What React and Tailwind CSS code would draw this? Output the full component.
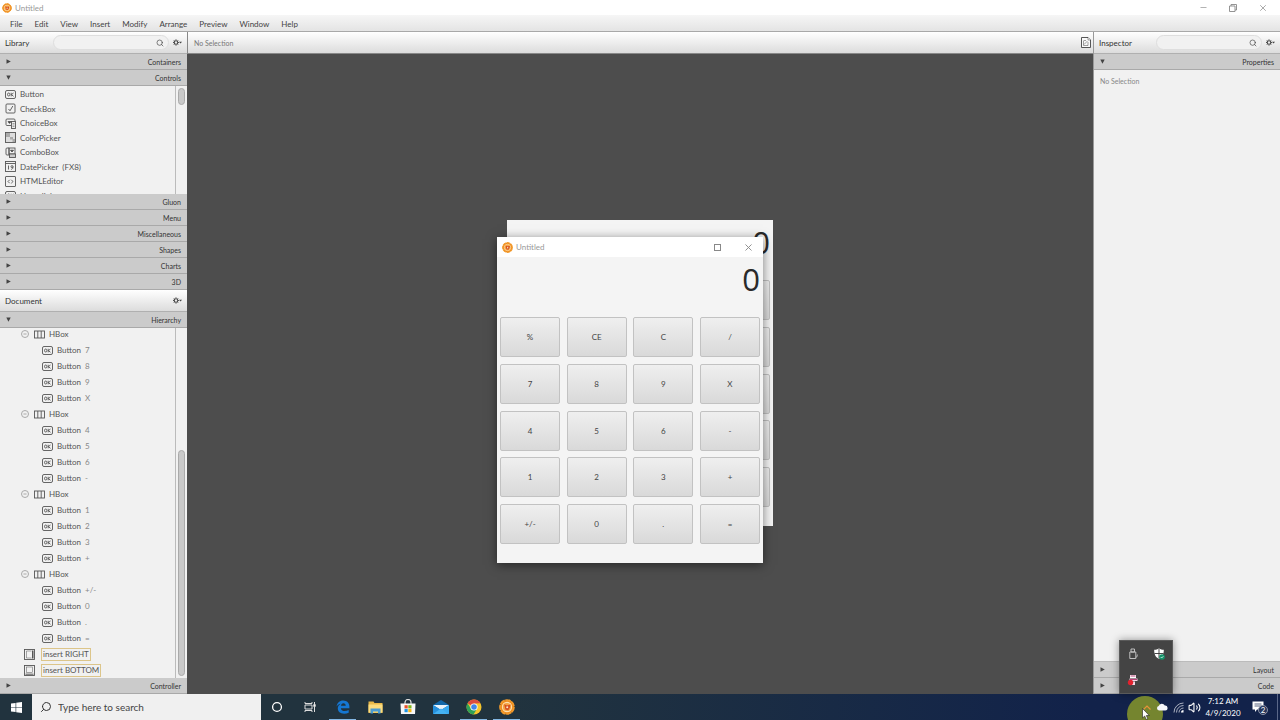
import React, { useState } from 'react'
import { Minus, Search, Volume2, X } from 'lucide-react'

const menus = ['File', 'Edit', 'View', 'Insert', 'Modify', 'Arrange', 'Preview', 'Window', 'Help']

const controls = [
  { label: 'Button', icon: 'button' },
  { label: 'CheckBox', icon: 'check' },
  { label: 'ChoiceBox', icon: 'choice' },
  { label: 'ColorPicker', icon: 'color' },
  { label: 'ComboBox', icon: 'combo' },
  { label: 'DatePicker  (FX8)', icon: 'date' },
  { label: 'HTMLEditor', icon: 'html' },
  { label: 'Hyperlink', icon: 'button' },
]

const librarySections = ['Gluon', 'Menu', 'Miscellaneous', 'Shapes', 'Charts', '3D']

const hierarchy = [
  ['7', '8', '9', 'X'],
  ['4', '5', '6', '-'],
  ['1', '2', '3', '+'],
  ['+/-', '0', '.', '='],
]

const keys = [
  '%', 'CE', 'C', '/',
  '7', '8', '9', 'X',
  '4', '5', '6', '-',
  '1', '2', '3', '+',
  '+/-', '0', '.', '=',
]

const iconPaths = {
  button: (
    <>
      <rect x="0.5" y="1.5" width="10" height="8" rx="1.5" />
      <ellipse cx="3.7" cy="5.5" rx="1.2" ry="1.5" />
      <path d="M6.2 3.8v3.5M8.5 4 6.4 5.6l2.1 1.700" />
    </>
  ),
  check: (
    <>
      <rect x="1" y="1" width="9" height="9" rx="1" />
      <path d="m3.5 6 1.5 1.8L7.8 3" />
    </>
  ),
  choice: (
    <>
      <path d="M6 7.5H2a1 1 0 0 1-1-1V2a1 1 0 0 1 1-1h7a1 1 0 0 1 1 1v1" />
      <path d="M3 3.6h3L4.5 5.4z" fill="#333" />
      <rect x="6.5" y="3.5" width="4" height="7" fill="#eee" />
      <path d="M7.5 5.5h2M7.5 7h2M7.5 8.5h2" strokeWidth="0.5" />
    </>
  ),
  color: (
    <>
      <rect x="0.5" y="0.5" width="10" height="10" fill="#ddd" />
      <path d="M1 1h4v4H1zM5 5h3v2.500H5zM7.500 7h2.500v3H7.500z" fill="#aaa" stroke="none" />
    </>
  ),
  combo: (
    <>
      <path d="M4 8H2a1 1 0 0 1-1-1V2a1 1 0 0 1 1-1h2z" />
      <rect x="4" y="1" width="6" height="6" />
      <path d="M5.500 3.200h3L7 5z" fill="#333" />
      <rect x="4.500" y="7" width="6" height="3.500" fill="#ccc" />
    </>
  ),
  date: (
    <>
      <rect x="0.5" y="0.5" width="10" height="10" />
      <path d="M0.500 2.500h10M3.500 4.500v4" />
      <circle cx="7" cy="5.600" r="1" />
      <path d="M8 5.600c0 1.600-.4 2.500-1.800 2.800" />
    </>
  ),
  html: (
    <>
      <rect x="0.5" y="0.5" width="10" height="10" rx="0.5" />
      <path d="M4.700 3.800 3 5.500l1.700 1.700M6.300 3.800 8 5.500 6.300 7.200" />
    </>
  ),
  hbox: (
    <>
      <rect x="0.5" y="2" width="10" height="7" />
      <path d="M3.800 2v7M7.200 2v7" />
    </>
  ),
  right: (
    <>
      <rect x="0.5" y="0.5" width="10" height="10" />
      <path d="M2.500 2v7M2.500 2h5M2.500 9h5" strokeWidth="0.5" />
      <path d="M8 1.500h1.500v8H8z" fill="#555" stroke="none" />
    </>
  ),
  bottom: (
    <>
      <rect x="0.5" y="0.5" width="10" height="10" />
      <rect x="2.500" y="2" width="6" height="5.500" strokeWidth="0.5" />
      <path d="M1.500 8.500h8V10h-8z" fill="#888" stroke="none" />
    </>
  ),
}

function NodeIcon({ name }) {
  return (
    <svg viewBox="0 0 11 11" className="size-[11px] shrink-0" fill="none" stroke="#555" strokeWidth="0.9">
      {iconPaths[name]}
    </svg>
  )
}

function AppLogo({ className }) {
  return (
    <svg viewBox="0 0 20 20" className={className}>
      <circle cx="10" cy="10" r="8.700" fill="#ef8c1c" />
      <circle cx="10" cy="10" r="8.800" fill="none" stroke="#f29a2c" strokeWidth="2" strokeDasharray="7 0.800" />
      <circle cx="10" cy="10" r="5.800" fill="#f4a443" stroke="#fde0b0" strokeWidth="1.300" />
      <path d="M6.500 6.500 10 8l4.500-1-1 4-2 3-3.500-1z" fill="#d64e20" />
      <circle cx="10.300" cy="10.300" r="1.300" fill="#fbe3c8" />
    </svg>
  )
}

function Triangle({ open }) {
  return (
    <svg viewBox="0 0 5 5" className="size-[5px]" fill="#444">
      {open ? <path d="M0.300 0.500h4.400L2.500 4.800z" /> : <path d="M0.500 0.300v4.400L4.800 2.500z" />}
    </svg>
  )
}

function SectionBar({ title, open = false }) {
  return (
    <button
      aria-expanded={open}
      className="flex h-4 w-full shrink-0 items-center justify-between border-b border-[#a9a9a9] bg-[#cbcbcb] px-1.5 text-[7px] text-[#333]"
    >
      <Triangle open={open} />
      <span>{title}</span>
    </button>
  )
}

function GearButton({ label }) {
  return (
    <button aria-label={label}>
      <svg viewBox="0 0 9 7" className="h-[7px] w-[9px]" fill="none" stroke="#444">
        <circle cx="3" cy="3.500" r="1.800" strokeWidth="1.100" />
        <path
          d="M3 .3v1M3 5.700v1M0 3.500h1M5 3.500h1M.9 1.400l.7.700M4.400 4.900l.7.700M5.100 1.400l-.7.700M1.600 4.900l-.7.700"
          strokeWidth="0.900"
        />
        <path d="M6 2.700h3L7.500 4.500z" fill="#444" stroke="none" />
      </svg>
    </button>
  )
}

function PanelHeader({ title, searchable = false }) {
  return (
    <div className="flex h-[22px] shrink-0 items-center gap-1 border-b border-[#b0b0b0] bg-linear-to-b from-white to-[#dcdcdc] pr-[5px] pl-[5px] text-[#333]">
      <h2 className="mr-auto shrink-0 pr-5">{title}</h2>
      {searchable && (
        <label className="flex h-[15px] min-w-0 flex-1 items-center rounded-full border border-[#dedede] bg-[#f1f1f1] pr-1 pl-2">
          <input aria-label={`Search ${title}`} className="w-full min-w-0 bg-transparent outline-none" />
          <Search size={8} strokeWidth={2} className="shrink-0 text-[#444]" />
        </label>
      )}
      <GearButton label={`${title} options`} />
    </div>
  )
}

function TreeButton({ text }) {
  return (
    <li className="flex h-4 items-center gap-1 pl-[42px]">
      <NodeIcon name="button" />
      <span>Button</span>
      <span className="text-[#888]">{text}</span>
    </li>
  )
}

function LibraryPanel() {
  return (
    <aside className="flex w-[187px] shrink-0 flex-col bg-[#f1f1f1]">
      <PanelHeader title="Library" searchable />
      <SectionBar title="Containers" />
      <SectionBar title="Controls" open />
      <div className="flex h-[108px] shrink-0 overflow-hidden">
        <ul className="flex h-[117px] flex-1 flex-col pt-px">
          {controls.map(item => (
            <li key={item.label} className="flex flex-1 items-center gap-1 pl-[5px] whitespace-pre text-[#555]">
              <NodeIcon name={item.icon} />
              <span>{item.label}</span>
            </li>
          ))}
        </ul>
        <div className="w-3 border-l border-[#bbb] px-0.5 pt-0.5">
          <div className="h-[17px] rounded-full border border-[#aaa] bg-[#c9c9c9]" />
        </div>
      </div>
      {librarySections.map(title => (
        <SectionBar key={title} title={title} />
      ))}
      <PanelHeader title="Document" />
      <SectionBar title="Hierarchy" open />
      <div className="flex min-h-0 flex-1 overflow-hidden">
        <ul className="-mt-0.5 flex-1 text-[#555]">
          {hierarchy.map(row => (
            <li key={row[0]}>
              <div className="flex h-4 items-center gap-1 pl-[21px]">
                <button
                  aria-label="Collapse"
                  className="mr-px flex size-2 items-center justify-center rounded-full border border-[#aaa] text-[#888]"
                >
                  <Minus size={4} strokeWidth={4} />
                </button>
                <NodeIcon name="hbox" />
                <span>HBox</span>
              </div>
              <ul>
                {row.map(text => (
                  <TreeButton key={text} text={text} />
                ))}
              </ul>
            </li>
          ))}
          {['right', 'bottom'].map(side => (
            <li key={side} className="flex h-4 items-center gap-1.5 pl-6">
              <NodeIcon name={side} />
              <span className="border border-[#dcc58a] px-px leading-[11px]">insert {side.toUpperCase()}</span>
            </li>
          ))}
        </ul>
        <div className="flex w-3 flex-col justify-end border-l border-[#bbb] px-0.5 pb-0.5">
          <div className="h-[65%] rounded-full border border-[#aaa] bg-[#c9c9c9]" />
        </div>
      </div>
      <SectionBar title="Controller" />
    </aside>
  )
}

function InspectorPanel() {
  return (
    <aside className="flex w-[187px] shrink-0 flex-col border-l border-[#999] bg-[#f1f1f1]">
      <PanelHeader title="Inspector" searchable />
      <SectionBar title="Properties" open />
      <p className="flex-1 px-1.5 pt-[5px] text-[7px] text-[#888]">No Selection</p>
      <div className="border-t border-[#bbb]">
        <SectionBar title="Layout" />
        <SectionBar title="Code" />
      </div>
    </aside>
  )
}

function Calculator({ value, onKey }) {
  return (
    <div className="h-[306px] w-full bg-[#f4f4f4] px-[3px]">
      <output className="block h-[60px] text-right font-['Open_Sans',sans-serif] text-[31px] leading-[44px] text-[#2a2a2a]">
        {value}
      </output>
      <div className="grid h-[227px] grid-cols-[repeat(4,60px)] content-between justify-between">
        {keys.map(key => (
          <button
            key={key}
            onClick={() => onKey(key)}
            className="h-10 rounded-xs border border-[#c2c2c2] bg-linear-to-b from-[#efefef] to-[#d9d9d9] text-[#444]"
          >
            {key}
          </button>
        ))}
      </div>
    </div>
  )
}

function Canvas() {
  const [value, setValue] = useState('0')

  const handleKey = key => {
    if (key === 'C' || key === 'CE') {
      setValue('0')
    } else if (/^\d$/.test(key)) {
      setValue(value === '0' ? key : value + key)
    }
  }

  return (
    <main className="flex min-w-0 flex-1 flex-col bg-[#4d4d4d]">
      <div className="flex h-[22px] shrink-0 items-center justify-between border-b border-l border-[#888] bg-linear-to-b from-white to-[#dcdcdc] pr-0.5 pl-1.5 text-[7px] text-[#777]">
        <span>No Selection</span>
        <button aria-label="Show document">
          <svg viewBox="0 0 10 11" className="h-[11px] w-2.5" fill="#fafafa" stroke="#444" strokeWidth="0.900">
            <path d="M0.500 0.500h6.500l2.500 2.500v7.500h-9z" />
            <path d="M7 0.500V3h2.500M2.500 3.500v5h4.500M3 7.500l3.500-3.500M3 3.500h2M7 5v3.500" strokeWidth="0.500" />
          </svg>
        </button>
      </div>
      <div className="flex flex-1 items-center justify-center pb-0.5">
        <div className="relative w-[266px]">
          <Calculator value={value} onKey={handleKey} />
          {/* preview window floats over the edited scene */}
          <div className="absolute top-[17px] -left-2.5 w-full bg-white shadow-[0_2px_10px_rgba(0,0,0,0.5)]">
            <div className="flex h-5 items-center pr-[9px] pl-[5px] text-[#999]">
              <AppLogo className="size-[11px]" />
              <span className="flex-1 pl-[3px]">Untitled</span>
              <button aria-label="Maximize" className="mr-[22px] size-[7px] border border-[#888]" />
              <button aria-label="Close" className="text-[#888]">
                <X size={11} strokeWidth={2} />
              </button>
            </div>
            <Calculator value={value} onKey={handleKey} />
          </div>
        </div>
      </div>
    </main>
  )
}

function TaskButton({ label, active = false, children }) {
  return (
    <button
      aria-label={label}
      className={
        active
          ? 'relative flex flex-1 items-center justify-center after:absolute after:bottom-0 after:h-px after:w-[27px] after:bg-[#84b8e4]'
          : 'flex flex-1 items-center justify-center'
      }
    >
      {children}
    </button>
  )
}

function TaskIcons() {
  return (
    <div className="flex w-[262px]">
      <TaskButton label="Cortana">
        <svg viewBox="0 0 12 12" className="size-3" fill="none" stroke="#fff" strokeWidth="1.300">
          <circle cx="6" cy="6" r="4.400" />
        </svg>
      </TaskButton>
      <TaskButton label="Task view">
        <svg viewBox="0 0 12 12" className="size-3" fill="none" stroke="#ddd" strokeWidth="1">
          <path d="M1 1v1.500h7V1M1 11V9.500h7V11M1 4h7v4H1zM10.500 1v10" />
          <path d="M9.800 3.500h1.400v2H9.800z" fill="#fff" />
        </svg>
      </TaskButton>
      <TaskButton label="Edge" active>
        <svg viewBox="0 0 14 14" className="size-3.5">
          <path
            d="M0.600 6.600C1 2.800 3.500.400 7.200.400c4 0 6.200 2.800 6.200 6v1.800H4.900c.1 1.900 1.600 2.800 3.700 2.800 1.500 0 2.900-.4 4.100-1.100v2.800c-1.300.700-2.900 1-4.500 1-4 0-6.400-2.100-6.400-5.200 0-2 1-3.700 2.800-4.700C2.900 4 1.400 5 .6 6.600zM5 5.800h4.700c0-1.600-.8-2.500-2.300-2.500-1.300 0-2.200.9-2.400 2.500z"
            fill="#1577d2"
          />
        </svg>
      </TaskButton>
      <TaskButton label="File Explorer">
        <svg viewBox="0 0 15 13" className="h-[13px] w-[15px]">
          <path d="M0.500 0.500h5l1 1.500h8v10h-14z" fill="#e9b949" />
          <path d="M0.500 3.500h14v8h-14z" fill="#fbdc7e" />
          <path d="M2.500 12.500v-5h10v5h-2.500v-2h-5v2z" fill="#4c9bd0" />
        </svg>
      </TaskButton>
      <TaskButton label="Store">
        <svg viewBox="0 0 16 16" className="size-4">
          <path d="M5 5V3.500a3 3 0 0 1 6 0V5" fill="none" stroke="#ddd" strokeWidth="1.200" />
          <path d="M0.500 4.500h15l-.5 10.500H1z" fill="#f7f7f7" />
          <path d="M4.500 6.200h3.200v3.200H4.500z" fill="#e8512b" />
          <path d="M8.300 6.200h3.200v3.200H8.300z" fill="#7cb518" />
          <path d="M4.500 10h3.200v3.200H4.500z" fill="#2196e3" />
          <path d="M8.300 10h3.200v3.200H8.300z" fill="#f7b616" />
        </svg>
      </TaskButton>
      <TaskButton label="Mail">
        <svg viewBox="0 0 16 14" className="h-3.5 w-4">
          <path d="M0 5l8-5 8 5v9H0z" fill="#1267a8" />
          <path d="M0 5h16l-8 5z" fill="#e9f3fa" />
          <path d="M0 5l8 5-8 4z" fill="#2690dc" />
          <path d="M16 5l-8 5 8 4z" fill="#38aaf0" />
          <path d="M0 14l8-5.500 8 5.500z" fill="#45b2f2" />
        </svg>
      </TaskButton>
      <TaskButton label="Chrome" active>
        <svg viewBox="0 0 16 16" className="size-4">
          <circle cx="8" cy="8" r="7.500" fill="#f5c52c" />
          <path d="M8 8 1.500 4.250A7.500 7.500 0 0 1 14.500 4.250L8 4.500z" fill="#dd4b3e" />
          <path d="M1.500 4.250A7.500 7.500 0 0 0 7.500 15.500L11 9.700 5 9.700z" fill="#2fa157" />
          <circle cx="8" cy="8" r="3.600" fill="#fff" />
          <circle cx="8" cy="8" r="2.800" fill="#4285e8" />
        </svg>
      </TaskButton>
      <TaskButton label="Scene Builder" active>
        <AppLogo className="size-4" />
      </TaskButton>
    </div>
  )
}

function HiddenIcons() {
  return (
    <div className="absolute bottom-full -left-[22px] grid h-[54px] w-[54px] grid-cols-2 place-items-center border border-[#5a5a5a] bg-[#444] shadow-[0_0_8px_rgba(0,0,0,0.4)]">
      <svg viewBox="0 0 10 12" className="h-3 w-2.5" fill="none" stroke="#ccc" strokeWidth="0.900">
        <path d="M3 1h3.500v3H3zM1.800 4h6v6.500H1.800zM7.800 9.500c1.500-.500 1.500-2 1.500-3" />
      </svg>
      <svg viewBox="0 0 12 12" className="size-3">
        <path
          d="M6 0.500c1.500 1 3 1.300 4.800 1.300 0 4-.8 7-4.800 9.200C2 8.800 1.200 5.800 1.200 1.800 3 1.800 4.500 1.500 6 .5z"
          fill="#fff"
        />
        <path d="M6 1v9.500M1.500 5.500h9" stroke="#333" strokeWidth="0.900" />
        <circle cx="9" cy="9" r="2.800" fill="#15936a" />
        <path d="M7.700 9l1 1 1.700-1.800" fill="none" stroke="#fff" strokeWidth="0.700" />
      </svg>
      <svg viewBox="0 0 12 12" className="size-3">
        <path d="M3 1h6v3H3z" fill="#fff" />
        <path d="M2.500 4.500h8V7h-8zM5 7.500h3V11H5z" fill="#f3d6e4" />
        <path d="M3.500 2h5M3 5.500h7" stroke="#b3306e" strokeWidth="0.900" />
        <circle cx="3.500" cy="8.500" r="2.700" fill="#e2222e" />
      </svg>
    </div>
  )
}

function Tray() {
  return (
    <div className="ml-auto flex items-center text-white">
      <div className="relative flex h-full w-3 items-center justify-center">
        <HiddenIcons />
        {/* click highlight under the pointer */}
        <div className="absolute top-0.5 -left-3.5 h-6 w-9 overflow-hidden">
          <div className="size-9 rounded-full bg-[#75852f]" />
        </div>
        <button aria-label="Show hidden icons" className="relative">
          <svg viewBox="0 0 8 5" className="h-[5px] w-2" fill="none" stroke="#e8933a" strokeWidth="1.200">
            <path d="M0.500 4.500 4 1l3.500 3.500" />
          </svg>
        </button>
        <svg viewBox="0 0 8 12" className="absolute top-3.5 left-px h-3 w-2" fill="#fff" stroke="#222" strokeWidth="0.600">
          <path d="M0.500 0.500v9.500l2.200-2 1.500 3.500 1.600-.7-1.500-3.300h3z" />
        </svg>
      </div>
      <svg viewBox="0 0 12 8" className="relative ml-[3px] h-2 w-3">
        <path d="M3 7.500a2.300 2.300 0 0 1-.3-4.500A3.300 3.300 0 0 1 8.800 2.500a2.500 2.500 0 0 1 .5 5z" fill="#f4f6fa" />
      </svg>
      <svg viewBox="0 0 11 11" className="ml-[5px] size-[11px]" fill="none" stroke="#aab0c0" strokeWidth="1">
        <path d="M1 10.500A9.500 9.500 0 0 1 10.500 1M3.500 10.500a7 7 0 0 1 7-7M6 10.500A4.500 4.500 0 0 1 10.500 6" />
        <path d="M8 10.500A2.500 2.500 0 0 1 10.500 8v2.500z" fill="#fff" stroke="none" />
      </svg>
      <Volume2 size={13} strokeWidth={2} className="ml-1" />
      <time className="ml-[3px] w-[38px] text-center leading-3">
        <span className="block">7:12 AM</span>
        <span className="block">4/9/2020</span>
      </time>
      <button aria-label="Notifications" className="relative ml-2.5">
        <svg viewBox="0 0 12 12" className="size-3">
          <path d="M0.500 0.500h11v8H5L3 11V8.500H.5z" fill="#fff" />
          <path d="M2.500 3h7M2.500 5h7" stroke="#12224a" strokeWidth="0.700" />
        </svg>
        <span className="absolute top-1 left-1.5 flex size-2.5 items-center justify-center rounded-full border border-[#8a93a8] bg-[#26345a]">
          2
        </span>
      </button>
      <span className="ml-[13px] h-full w-[3px] border-l border-[#5a6788]" />
    </div>
  )
}

function Taskbar() {
  return (
    <footer className="flex h-[26px] shrink-0 bg-linear-to-r from-[#21333e] from-40% to-[#12224a] to-85%">
      <button aria-label="Start" className="flex w-8 items-center justify-center">
        <svg viewBox="0 0 12 12" className="size-[11px]" fill="#fff">
          <path d="M0 1.700 5 1v4.600H0zM5.700.900 12 0v5.600H5.700zM0 6.300h5V11l-5-.7zM5.700 6.300H12V12l-6.300-.9z" />
        </svg>
      </button>
      <label className="flex w-[229px] items-center gap-1.5 bg-[#f0f0f0] pl-2 text-[#333]">
        <Search size={12} strokeWidth={2} className="shrink-0 -scale-x-100" />
        <input
          aria-label="Search"
          placeholder="Type here to search"
          className="w-full min-w-0 bg-transparent text-[10px] outline-none placeholder:text-[#444]"
        />
      </label>
      <TaskIcons />
      <Tray />
    </footer>
  )
}

export default function App() {
  return (
    <div className="flex h-screen flex-col overflow-hidden bg-white font-[Lato,'Open_Sans',sans-serif] text-[8px] leading-3">
      <header className="shrink-0">
        <div className="flex h-[15px] items-center pr-3 pl-0.5 text-[#999]">
          <AppLogo className="size-2.5" />
          <h1 className="flex-1 pl-[3px]">Untitled</h1>
          <div className="flex items-center gap-[21px]">
            <button aria-label="Minimize">
              <Minus size={9} strokeWidth={2} />
            </button>
            <button aria-label="Restore">
              <svg viewBox="0 0 8 8" className="size-2" fill="none" stroke="#888" strokeWidth="0.900">
                <path d="M0.500 2h5.500v5.500H.5zM2 2V.5h5.500V6H6" />
              </svg>
            </button>
            <button aria-label="Close">
              <X size={10} strokeWidth={2} />
            </button>
          </div>
        </div>
        <nav className="flex h-[17px] items-center gap-3 border-b border-[#a8a8a8] bg-linear-to-b from-[#f6f6f6] to-[#e4e4e4] pt-0.5 pl-2.5 text-[#444]">
          {menus.map(menu => (
            <button key={menu}>{menu}</button>
          ))}
        </nav>
      </header>
      <div className="flex min-h-0 flex-1">
        <LibraryPanel />
        <Canvas />
        <InspectorPanel />
      </div>
      <Taskbar />
    </div>
  )
}
